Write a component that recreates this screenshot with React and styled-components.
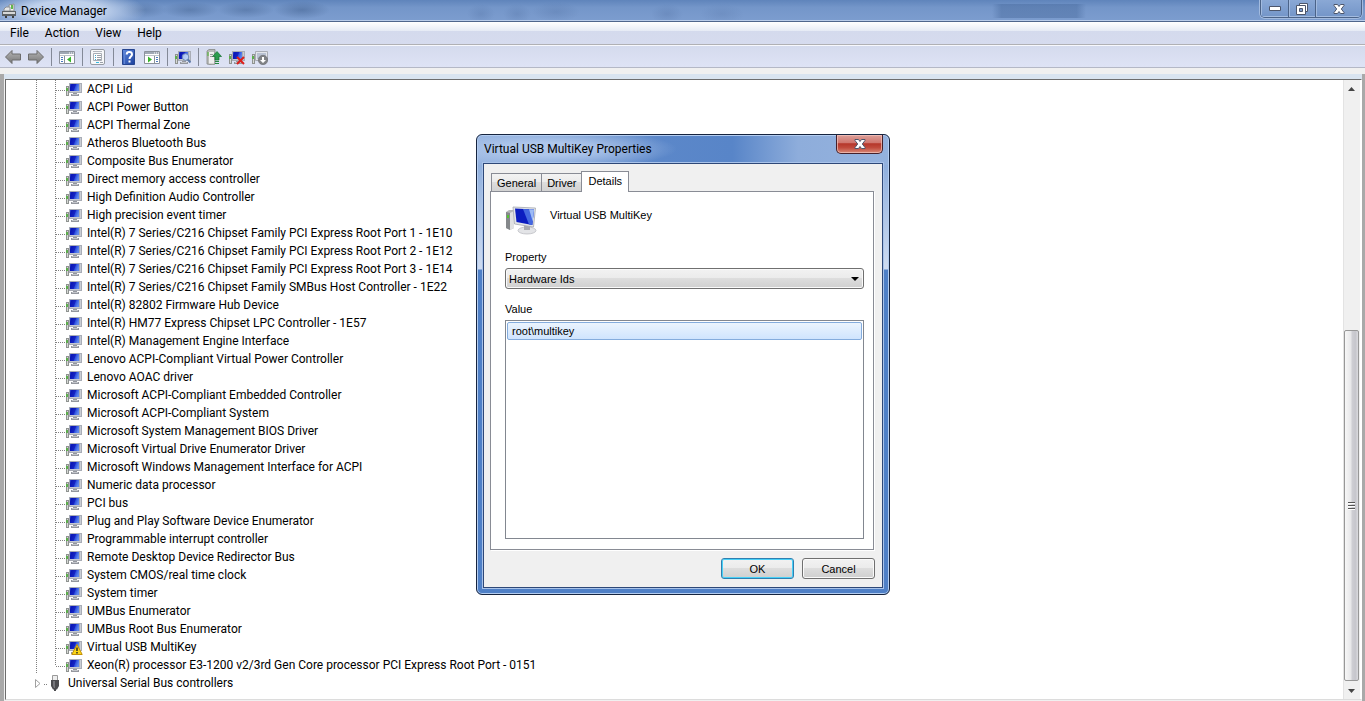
import React, { useState } from 'react';
import styled, { createGlobalStyle } from 'styled-components';

const GlobalStyle = createGlobalStyle`
  * {
    box-sizing: border-box;
  }

  body {
    margin: 0;
    overflow: hidden;
    background: #fff;
    color: #000;
    font-family: Roboto, "Open Sans", sans-serif;
    font-size: 12px;
    line-height: 18px;
  }

  button, select {
    margin: 0;
    padding: 0;
    color: inherit;
    font: inherit;
  }

  svg {
    display: block;
    flex: none;
  }
`;

// Main window
const Window = styled.div`
  position: relative;
  display: flex;
  flex-direction: column;
  height: 100vh;
  min-width: 900px;
`;

const TitleBar = styled.header`
  display: flex;
  align-items: flex-start;
  height: 22px;
  padding-left: 2px;
  border-bottom: 1px solid #4f668c;
  box-shadow: inset 0 -1px #b9cce9;
  background:
    radial-gradient(ellipse 80px 22px at 66px 11px, rgba(200, 216, 240, 0.9) 45%, transparent),
    radial-gradient(ellipse 24px 8px at 143px 10px, rgba(50, 80, 125, 0.3), transparent),
    radial-gradient(ellipse 28px 8px at 190px 10px, rgba(50, 80, 125, 0.35), transparent),
    radial-gradient(ellipse 28px 8px at 246px 10px, rgba(50, 80, 125, 0.35), transparent),
    radial-gradient(ellipse 28px 9px at 302px 10px, rgba(50, 80, 125, 0.4), transparent),
    radial-gradient(ellipse 14px 10px at 481px 14px, rgba(60, 90, 140, 0.2), transparent),
    radial-gradient(ellipse 14px 10px at 517px 14px, rgba(60, 90, 140, 0.2), transparent),
    radial-gradient(ellipse 24px 10px at 556px 12px, rgba(60, 90, 140, 0.2), transparent),
    radial-gradient(ellipse 16px 10px at 667px 14px, rgba(60, 90, 140, 0.2), transparent),
    radial-gradient(ellipse 22px 10px at 722px 14px, rgba(60, 90, 140, 0.15), transparent),
    linear-gradient(90deg, transparent, rgba(70, 104, 155, 0.45) 10%, rgba(70, 104, 155, 0.45) 90%, transparent) 992px 4px / 94px 14px no-repeat,
    linear-gradient(#5f84bb, #7496c9 35%, #7c9dcf);
`;

const WindowTitle = styled.h1`
  flex: 1;
  margin: 0 0 0 3px;
  font-size: 12px;
  font-weight: 400;
  line-height: 22px;
`;

const CaptionButtons = styled.div`
  display: flex;
  height: 18px;
  margin-right: 3px;
  border: 1px solid #4b6388;
  border-top: 0;
  border-radius: 0 0 5px 5px;
  box-shadow: 0 0 0 1px #a3bbdf;
  overflow: hidden;
`;

const CaptionButton = styled.button`
  display: flex;
  align-items: center;
  justify-content: center;
  width: ${({ $wide }) => ($wide ? '46px' : '27px')};
  border: 0;
  border-left: ${({ $first }) => ($first ? '0' : '1px solid #4b6388')};
  box-shadow: inset 1px -1px #a3bbdf;
  background: linear-gradient(#8aa8d5, #7395c8);
`;

const MenuBar = styled.nav`
  display: flex;
  height: 23px;
  padding-left: 2px;
  border-bottom: 1px solid #b0b0b4;
  background: linear-gradient(#fff, #e6ebf5 40%, #d4daed 41%, #d6dbee);
`;

const MenuItem = styled.button`
  padding: 0 8px;
  border: 0;
  background: none;
  line-height: 22px;
`;

const Toolbar = styled.div`
  display: flex;
  align-items: center;
  gap: 7px;
  height: 23px;
  padding: 2px 5px 0;
  border-bottom: 1px solid #b4b8c6;
  box-shadow: inset 0 1px #f7f8fd;
  background: linear-gradient(#d4daed, #dee3f5);
`;

const ToolButton = styled.button`
  width: 16px;
  height: 16px;
  border: 0;
  background: none;
`;

const Separator = styled.span`
  width: 1px;
  height: 18px;
  background: #838997;
`;

const Body = styled.div`
  flex: 1;
  display: flex;
  flex-direction: column;
  min-height: 0;
  background: #f0f0f0;
`;

const Workspace = styled.main`
  flex: 1;
  display: flex;
  min-height: 0;
  margin-top: 6px;
  padding: 5px 3px 1px 5px;
  background:
    linear-gradient(#d9e4f0, #d9e4f0) 4px 0 / calc(100% - 7px) 5px no-repeat,
    linear-gradient(90deg, #a9a9a9 4px, #f0f0f0 4px, #f0f0f0 calc(100% - 3px), #a9a9a9 calc(100% - 3px));
`;

const TreePane = styled.div`
  flex: 1;
  display: flex;
  border: 1px solid #6d6d6d;
  border-right-color: #fff;
  border-bottom-color: #dcdcdc;
  background: #fff;
  overflow: hidden;
`;

const Tree = styled.ul`
  flex: 1;
  margin: 0;
  padding: 0 0 0 30px;
  list-style: none;
`;

const TreeRow = styled.li`
  display: flex;
  align-items: center;
  height: 18px;
`;

const CategoryRow = styled(TreeRow)`
  margin-left: -2px;
`;

const dots = (direction) =>
  `repeating-linear-gradient(${direction}, #808080 0 1px, transparent 1px 2px)`;

const Guide = styled.span`
  align-self: flex-start;
  width: 1px;
  height: ${({ $half }) => ($half ? '10px' : '18px')};
  margin-right: ${({ $gap }) => $gap || '0'};
  background: ${dots('180deg')};
`;

const Branch = styled.span`
  width: ${({ $width }) => $width};
  height: 1px;
  margin-top: 2px;
  background: ${dots('90deg')};
`;

const RowLabel = styled.span`
  margin-left: ${({ $group }) => ($group ? '8px' : '4px')};
  white-space: nowrap;
`;

const ScrollBar = styled.div`
  display: flex;
  flex-direction: column;
  width: 18px;
  padding-right: 1px;
  border-right: 1px solid #fff;
  border-left: 1px solid #e3e3e3;
  background: #f0f0f0;
`;

const ScrollArrow = styled.button`
  display: flex;
  align-items: center;
  justify-content: center;
  height: 17px;
  border: 0;
  background: none;
`;

const ScrollTrack = styled.div`
  flex: 1;
  display: flex;
  flex-direction: column;
  justify-content: flex-end;
`;

const ScrollThumb = styled.div`
  display: flex;
  align-items: center;
  justify-content: center;
  height: 60%;
  margin-bottom: 1px;
  border: 1px solid #979797;
  border-radius: 2px;
  background: linear-gradient(90deg, #f7f7f7, #e6e6e8 48%, #cfcfd4 52%, #c6c6cc 80%, #dadade);
`;

// Properties dialog
const Dialog = styled.section`
  position: absolute;
  top: 134px;
  left: 476px;
  display: flex;
  flex-direction: column;
  width: 414px;
  height: 461px;
  padding: 0 6px 6px;
  border: 1px solid #16243f;
  border-radius: 6px;
  box-shadow: inset 0 0 0 1px #b4cdf0;
  background:
    radial-gradient(ellipse 130px 20px at 70px 14px, rgba(178, 201, 236, 0.95) 30%, transparent),
    linear-gradient(90deg, #91b0de, #5b87c9 45%, #5885c8 62%, #8eaddb 78%, #94b2de) 0 0 / 100% 30px no-repeat,
    linear-gradient(#8fafdd 30px, #cfdcf1 134px, #4f80c7 135px);
  font-family: "Liberation Sans", Arial, sans-serif;
  font-size: 11px;
  line-height: 16px;
`;

const DialogTitle = styled.div`
  display: flex;
  align-items: flex-start;
  height: 28px;
`;

const DialogName = styled.h2`
  flex: 1;
  margin: 0 0 0 1px;
  font-family: Roboto, "Open Sans", sans-serif;
  font-size: 12px;
  font-weight: 400;
  line-height: 28px;
`;

const CloseButton = styled.button`
  display: flex;
  align-items: center;
  justify-content: center;
  width: 47px;
  height: 19px;
  border: 1px solid #45202a;
  border-top: 0;
  border-radius: 0 0 5px 5px;
  box-shadow: inset 0 0 0 1px rgba(244, 196, 190, 0.7);
  background: linear-gradient(#dda09a, #cf746c 45%, #b5362a 48%, #c04a3c 70%, #d98a78);
`;

const Client = styled.div`
  flex: 1;
  display: flex;
  flex-direction: column;
  padding: 7px 8px 8px 6px;
  border: 1px solid #2e4878;
  box-shadow: 0 0 0 1px #a9c3ea;
  background: #f0f0f0;
`;

const TabList = styled.div`
  display: flex;
  align-items: flex-end;
  height: 20px;
  padding-left: 1px;
`;

const Tab = styled.button`
  position: relative;
  height: ${({ $active }) => ($active ? '21px' : '18px')};
  margin-bottom: ${({ $active }) => ($active ? '-1px' : '0')};
  margin-right: -1px;
  padding: ${({ $active }) => ($active ? '0 6px 2px' : '0 5px')};
  border: 1px solid #898c95;
  border-bottom: 0;
  background: ${({ $active }) =>
    $active ? '#fff' : 'linear-gradient(#f3f3f3, #ebebeb 48%, #dddddd 50%, #d2d2d2)'};
`;

const Panel = styled.div`
  flex: 1;
  display: flex;
  flex-direction: column;
  padding: 14px 9px 10px 14px;
  border: 1px solid #898c95;
  box-shadow: 1px 1px #fff;
  background: #fff;
`;

const DeviceHeader = styled.div`
  display: flex;
  gap: 13px;
  height: 30px;
  line-height: 18px;
`;

const FieldLabel = styled.label`
  margin: ${({ $first }) => ($first ? '13px' : '12px')} 0 3px;
`;

const SelectWrap = styled.div`
  display: grid;
  align-items: center;
  border: 1px solid #707070;
  border-radius: 3px;
  box-shadow: inset 0 0 0 1px #fafafa;
  background: linear-gradient(#f2f2f2, #ebebeb 48%, #dddddd 50%, #cfcfcf);

  > * {
    grid-area: 1 / 1;
  }

  > svg {
    justify-self: end;
    margin-right: 4px;
    pointer-events: none;
  }
`;

const Select = styled.select`
  width: 100%;
  height: 19px;
  padding: 0 3px;
  border: 0;
  background: none;
  appearance: none;
  outline: 0;
`;

const ValueList = styled.ul`
  flex: 1;
  margin: 0;
  padding: 1px;
  border: 1px solid #828790;
  list-style: none;
`;

const ValueItem = styled.li`
  padding: 0 4px;
  border: 1px solid #84acdd;
  border-radius: 2px;
  background: linear-gradient(#ebf4fe, #cfe4fe);
`;

const Actions = styled.div`
  display: flex;
  justify-content: flex-end;
  gap: 8px;
  margin: 8px -1px 0 0;
`;

const ActionButton = styled.button`
  width: 73px;
  height: 21px;
  border: 1px solid ${({ $primary }) => ($primary ? '#2f7fb0' : '#707070')};
  border-radius: 3px;
  box-shadow: inset 0 0 0 1px ${({ $primary }) => ($primary ? '#48d0f7' : '#fafafa')};
  background: linear-gradient(#f2f2f2, #ebebeb 48%, #dddddd 50%, #cfcfcf);
`;

const devices = [
  'ACPI Lid',
  'ACPI Power Button',
  'ACPI Thermal Zone',
  'Atheros Bluetooth Bus',
  'Composite Bus Enumerator',
  'Direct memory access controller',
  'High Definition Audio Controller',
  'High precision event timer',
  'Intel(R) 7 Series/C216 Chipset Family PCI Express Root Port 1 - 1E10',
  'Intel(R) 7 Series/C216 Chipset Family PCI Express Root Port 2 - 1E12',
  'Intel(R) 7 Series/C216 Chipset Family PCI Express Root Port 3 - 1E14',
  'Intel(R) 7 Series/C216 Chipset Family SMBus Host Controller - 1E22',
  'Intel(R) 82802 Firmware Hub Device',
  'Intel(R) HM77 Express Chipset LPC Controller - 1E57',
  'Intel(R) Management Engine Interface',
  'Lenovo ACPI-Compliant Virtual Power Controller',
  'Lenovo AOAC driver',
  'Microsoft ACPI-Compliant Embedded Controller',
  'Microsoft ACPI-Compliant System',
  'Microsoft System Management BIOS Driver',
  'Microsoft Virtual Drive Enumerator Driver',
  'Microsoft Windows Management Interface for ACPI',
  'Numeric data processor',
  'PCI bus',
  'Plug and Play Software Device Enumerator',
  'Programmable interrupt controller',
  'Remote Desktop Device Redirector Bus',
  'System CMOS/real time clock',
  'System timer',
  'UMBus Enumerator',
  'UMBus Root Bus Enumerator',
  'Virtual USB MultiKey',
  'Xeon(R) processor E3-1200 v2/3rd Gen Core processor PCI Express Root Port - 0151',
];

// Icons
const SharedDefs = () => (
  <svg width="0" height="0" style={{ position: 'absolute' }} aria-hidden="true">
    <defs>
      <linearGradient id="screen" x1="0" y1="0" x2="1" y2="0.3">
        <stop offset="0" stopColor="#3a55d8" />
        <stop offset="0.2" stopColor="#0a17b4" />
        <stop offset="0.6" stopColor="#1424c4" />
        <stop offset="0.7" stopColor="#3053e0" />
        <stop offset="1" stopColor="#5c86ee" />
      </linearGradient>
      <linearGradient id="arrow" x1="0" y1="0" x2="0" y2="1">
        <stop offset="0" stopColor="#b5b5b5" />
        <stop offset="1" stopColor="#777" />
      </linearGradient>
      <linearGradient id="help" x1="0" y1="0" x2="1" y2="1">
        <stop offset="0" stopColor="#5f8be0" />
        <stop offset="1" stopColor="#1c3f9c" />
      </linearGradient>
    </defs>
  </svg>
);

const Computer = () => (
  <>
    <path d="M0 5h3v10H0z" fill="#8f9390" />
    <path d="M1 6h1v8H1z" fill="#d5d8d5" />
    <path d="M0 7h2v3H0z" fill="#5cae4b" />
    <path d="M3 2h13v10H3z" fill="#a9adb6" />
    <path d="M14 3h1v8h-1z" fill="#c9cdd5" />
    <path d="M4 10h10v1H4z" fill="#c4c8d0" />
    <path d="M4 3h9v7H4z" fill="url(#screen)" />
    <path d="M7 12h4v1h2v2H5v-2h2z" fill="#94979e" />
    <path d="M6 13h6v1H6z" fill="#c2c5ca" />
  </>
);

const DeviceIcon = ({ warning }) => (
  <svg width="17" height="16" viewBox="0 0 17 16">
    <Computer />
    {warning && (
      <>
        <path d="M11 5.500l5.200 10H5.800z" fill="#fbd616" stroke="#c29008" strokeLinejoin="round" />
        <path d="M10.300 8.500h1.400V12h-1.400zM10.300 13h1.400v1.400h-1.400z" fill="#222" />
      </>
    )}
  </svg>
);

const LargeDeviceIcon = () => (
  <svg width="32" height="30" viewBox="0 0 32 30">
    <path d="M1 6l3-2h5v18l-4 2-4-2z" fill="#b4b6b8" />
    <path d="M1 6l4 1v17l-4-2z" fill="#85888b" />
    <path d="M5 7l4-2v17l-4 2z" fill="#e0e1e2" />
    <path d="M2 9h2v3H2z" fill="#55c332" />
    <ellipse cx="22" cy="24.500" rx="9" ry="3.500" fill="#e3e4e7" stroke="#b4b6bb" strokeWidth="0.700" />
    <path d="M19 19l6 1v4h-6z" fill="#a9abb1" />
    <path d="M8 1l22.500 1-2 19L9.500 18z" fill="#e2e4e8" stroke="#a5a8b0" strokeWidth="0.800" />
    <path d="M10 2.500l19 1-1.700 15.500L11.500 16z" fill="#0b1cc0" />
    <path d="M18 3l11 .500-1.700 15.500-3.300-.500z" fill="#4468e0" />
    <path d="M24 3.300l5 .200-1.200 12z" fill="#9dbbf5" />
  </svg>
);

const AppIcon = () => (
  <svg width="16" height="20" viewBox="0 0 16 20">
    <path d="M7 5l5-1v7H7z" fill="#f1f2f1" stroke="#8d918e" />
    <path d="M9 5h2v4H9z" fill="#62b94a" />
    <path d="M2 9l2-2h4v4H2z" fill="#e4e5e5" stroke="#8c9094" />
    <path d="M0 11h14v5H0z" fill="#5d6265" />
    <path d="M1 12h12v2H1z" fill="#d6d8d8" />
    <path d="M3 16h2v2H3zM10 16h2v2h-2z" fill="#3c3f42" />
  </svg>
);

const UsbIcon = () => (
  <svg width="10" height="16" viewBox="0 0 10 16">
    <path d="M2.500.500h5V6h-5z" fill="#ededed" stroke="#999" />
    <path d="M1 5h8v6L7 14.500H6V16H4v-1.500H3L1 11z" fill="#4c4c50" />
    <path d="M3 6h2v7H4l-1-2z" fill="#77777c" />
  </svg>
);

const ArrowIcon = ({ flip }) => (
  <svg width="16" height="16" viewBox="0 0 16 16">
    <path
      d={flip ? 'M15.500 8L9 1.500V5H.500v6H9v3.500z' : 'M.500 8L7 1.500V5h8.500v6H7v3.500z'}
      fill="url(#arrow)"
      stroke="#6d6d6d"
      strokeLinejoin="round"
    />
  </svg>
);

const PaneIcon = ({ flip }) => (
  <svg width="16" height="16" viewBox="0 0 16 16">
    <path d="M.500 2.500h15v12H.500z" fill="#fff" stroke="#8b919b" />
    <path d="M1 3h14v2H1z" fill="#a0a8b5" />
    <path d="M10 3.500h1v1h-1zM12 3.500h1v1h-1zM14 3.500h1v1h-1z" fill="#fff" />
    <path d="M1 6.500h14" stroke="#c0c4cb" />
    {flip ? (
      <>
        <path d="M10.500 7v7" stroke="#8b919b" />
        <path d="M4 7.500v6L8 10.500z" fill="#37b52a" />
        <path d="M12 8.500h2M12 10.500h2M12 12.500h2" stroke="#4c7bc0" />
      </>
    ) : (
      <>
        <path d="M5.500 7v7" stroke="#8b919b" />
        <path d="M12 7.500v6L8 10.500z" fill="#37b52a" />
        <path d="M2 8.500h2M2 10.500h2M2 12.500h2" stroke="#4c7bc0" />
      </>
    )}
  </svg>
);

const PropertiesIcon = () => (
  <svg width="16" height="16" viewBox="0 0 16 16">
    <rect x=".500" y=".500" width="14" height="15" rx="1.500" fill="#f7f8fa" stroke="#969ba3" />
    <path d="M3.500 4.500h8v7h-8z" fill="#fff" stroke="#a8adb5" />
    <path d="M3 2.500h9" stroke="#b3b7be" />
    <path d="M5 6.500h1M5 8.500h1M5 10.500h1" stroke="#3aa7d0" />
    <path d="M7 6.500h4M7 8.500h4M7 10.500h4" stroke="#9aa0a8" />
    <path d="M6 13.500h3" stroke="#35b9e0" />
    <path d="M10 13.500h3" stroke="#9aa0a8" />
  </svg>
);

const HelpIcon = () => (
  <svg width="16" height="16" viewBox="0 0 16 16">
    <path d="M1.500.500h12v15h-12z" fill="url(#help)" stroke="#26458f" />
    <path d="M3.500 1v14" stroke="#5f83d2" />
    <path d="M5.700 5.500c0-3.300 5.300-3.300 5.300 0 0 2-2.500 2.200-2.500 4.500" fill="none" stroke="#fff" strokeWidth="2" />
    <path d="M7.500 11.500h2v2h-2z" fill="#fff" />
  </svg>
);

const ScanIcon = () => (
  <svg width="16" height="16" viewBox="0 0 16 16">
    <Computer />
    <circle cx="10.500" cy="8" r="3.300" fill="#cfe3fb" fillOpacity="0.8" stroke="#6f8bb5" />
    <path d="M12.800 10.500l2.700 3" stroke="#5c79a8" strokeWidth="2" />
  </svg>
);

const UpdateIcon = () => (
  <svg width="16" height="16" viewBox="0 0 16 16">
    <path d="M1 2l2-1.500h6V15L7 16l-6-1z" fill="#b9bbb9" stroke="#858885" strokeWidth="0.800" />
    <path d="M3 3h5v11.500H3z" fill="#eeefee" />
    <path d="M1.500 3h1v4h-1z" fill="#4cba33" />
    <path d="M4 5.500h3M4 7.500h3" stroke="#999" />
    <path d="M11 2.500l4.500 5H13V11H9V7.500H6.500z" fill="#2c9c4c" stroke="#16702f" strokeWidth="0.700" />
    <path d="M9 12.500h4M9 14.500h4" stroke="#23883f" />
  </svg>
);

const UninstallIcon = () => (
  <svg width="16" height="16" viewBox="0 0 16 16">
    <Computer />
    <path d="M8 8l7 7M15 8l-7 7" stroke="#dc1f1b" strokeWidth="2" />
  </svg>
);

const DisableIcon = () => (
  <svg width="16" height="16" viewBox="0 0 16 16">
    <path d="M0 5h3v10H0z" fill="#8f9390" />
    <path d="M1 6h1v8H1z" fill="#d5d8d5" />
    <path d="M0 7h2v3H0z" fill="#5cae4b" />
    <path d="M3.500 2.500h12v9h-12z" fill="#e3e5ea" stroke="#a9adb6" />
    <path d="M5 4h9v6H5z" fill="#b9c2d3" />
    <circle cx="11" cy="11" r="4.700" fill="#808285" stroke="#66686b" strokeWidth="0.600" />
    <path d="M10 8h2v3h2l-3 3-3-3h2z" fill="#fff" />
  </svg>
);

const CrossIcon = () => (
  <svg width="12" height="10" viewBox="0 0 12 10">
    <path
      d="M1 .500h3.500L6 2.500 7.500.500H11v1L8.300 5 11 8.500v1H7.500L6 7.500l-1.500 2H1v-1L3.700 5 1 1.500z"
      fill="#fff"
      stroke="#4d566b"
    />
  </svg>
);

const tools = [
  { label: 'Back', icon: <ArrowIcon /> },
  { label: 'Forward', icon: <ArrowIcon flip /> },
  null,
  { label: 'Show/Hide Console Tree', icon: <PaneIcon /> },
  null,
  { label: 'Properties', icon: <PropertiesIcon /> },
  null,
  { label: 'Help', icon: <HelpIcon /> },
  { label: 'Show/Hide Action Pane', icon: <PaneIcon flip /> },
  null,
  { label: 'Scan for hardware changes', icon: <ScanIcon /> },
  null,
  { label: 'Update Driver Software', icon: <UpdateIcon /> },
  { label: 'Uninstall', icon: <UninstallIcon /> },
  { label: 'Disable', icon: <DisableIcon /> },
];

const DeviceTree = () => (
  <TreePane>
    <Tree role="tree" aria-label="Devices">
      {devices.map((name, index) => (
        <TreeRow key={name} role="treeitem">
          <Guide $gap="18px" />
          <Guide $half={index === devices.length - 1} />
          <Branch $width="10px" />
          <DeviceIcon warning={name === 'Virtual USB MultiKey'} />
          <RowLabel>{name}</RowLabel>
        </TreeRow>
      ))}
      <CategoryRow role="treeitem" aria-expanded="false">
        <svg width="10" height="12" viewBox="0 0 10 12">
          <path d="M1.500 2.500v8L6 6.500z" fill="#fff" stroke="#a0a0a0" />
        </svg>
        <Branch $width="4px" />
        <svg width="2" height="1" />
        <UsbIcon />
        <RowLabel $group>Universal Serial Bus controllers</RowLabel>
      </CategoryRow>
    </Tree>
    <ScrollBar>
      <ScrollArrow aria-label="Scroll up">
        <svg width="7" height="4" viewBox="0 0 7 4">
          <path d="M0 4l3.500-4L7 4z" fill="#444" />
        </svg>
      </ScrollArrow>
      <ScrollTrack>
        <ScrollThumb>
          <svg width="7" height="8" viewBox="0 0 7 8">
            <path d="M0 .500h7M0 3.500h7M0 6.500h7" stroke="#555" />
            <path d="M0 1.500h7M0 4.500h7M0 7.500h7" stroke="#fff" />
          </svg>
        </ScrollThumb>
      </ScrollTrack>
      <ScrollArrow aria-label="Scroll down">
        <svg width="7" height="4" viewBox="0 0 7 4">
          <path d="M0 0h7L3.500 4z" fill="#444" />
        </svg>
      </ScrollArrow>
    </ScrollBar>
  </TreePane>
);

const PropertiesDialog = () => {
  const [activeTab, setActiveTab] = useState('Details');

  return (
    <Dialog role="dialog" aria-labelledby="dialog-title">
      <DialogTitle>
        <DialogName id="dialog-title">Virtual USB MultiKey Properties</DialogName>
        <CloseButton aria-label="Close">
          <CrossIcon />
        </CloseButton>
      </DialogTitle>
      <Client>
        <TabList role="tablist">
          {['General', 'Driver', 'Details'].map((tab) => (
            <Tab
              key={tab}
              role="tab"
              aria-selected={tab === activeTab}
              $active={tab === activeTab}
              onClick={() => setActiveTab(tab)}
            >
              {tab}
            </Tab>
          ))}
        </TabList>
        <Panel role="tabpanel">
          <DeviceHeader>
            <LargeDeviceIcon />
            <span>Virtual USB MultiKey</span>
          </DeviceHeader>
          <FieldLabel $first htmlFor="property">Property</FieldLabel>
          <SelectWrap>
            <Select id="property" defaultValue="Hardware Ids">
              <option>Hardware Ids</option>
            </Select>
            <svg width="8" height="4" viewBox="0 0 8 4">
              <path d="M0 0h8L4 4z" fill="#000" />
            </svg>
          </SelectWrap>
          <FieldLabel as="span" id="value-label">Value</FieldLabel>
          <ValueList role="listbox" aria-labelledby="value-label">
            <ValueItem role="option" aria-selected="true">root\multikey</ValueItem>
          </ValueList>
        </Panel>
        <Actions>
          <ActionButton $primary>OK</ActionButton>
          <ActionButton>Cancel</ActionButton>
        </Actions>
      </Client>
    </Dialog>
  );
};

const App = () => (
  <>
    <GlobalStyle />
    <SharedDefs />
    <Window>
      <TitleBar>
        <AppIcon />
        <WindowTitle>Device Manager</WindowTitle>
        <CaptionButtons>
          <CaptionButton $first aria-label="Minimize">
            <svg width="12" height="5" viewBox="0 0 12 5">
              <path d="M.500.500h11v4H.500z" fill="#fff" stroke="#4d566b" />
            </svg>
          </CaptionButton>
          <CaptionButton aria-label="Restore">
            <svg width="12" height="12" viewBox="0 0 12 12">
              <path d="M3.500.500h8v8h-8z" fill="#fff" stroke="#4d566b" />
              <path d="M.500 2.500h9v9h-9z" fill="#fff" stroke="#4d566b" />
              <path d="M3.500 5.500h3v3h-3z" fill="#7c9dcf" stroke="#4d566b" />
            </svg>
          </CaptionButton>
          <CaptionButton $wide aria-label="Close">
            <CrossIcon />
          </CaptionButton>
        </CaptionButtons>
      </TitleBar>
      <MenuBar>
        {['File', 'Action', 'View', 'Help'].map((item) => (
          <MenuItem key={item}>{item}</MenuItem>
        ))}
      </MenuBar>
      <Toolbar role="toolbar" aria-label="Tools">
        {tools.map((tool, index) =>
          tool ? (
            <ToolButton key={tool.label} aria-label={tool.label}>
              {tool.icon}
            </ToolButton>
          ) : (
            <Separator key={index} />
          )
        )}
      </Toolbar>
      <Body>
        <Workspace>
          <DeviceTree />
        </Workspace>
      </Body>
      <PropertiesDialog />
    </Window>
  </>
);

export default App;
